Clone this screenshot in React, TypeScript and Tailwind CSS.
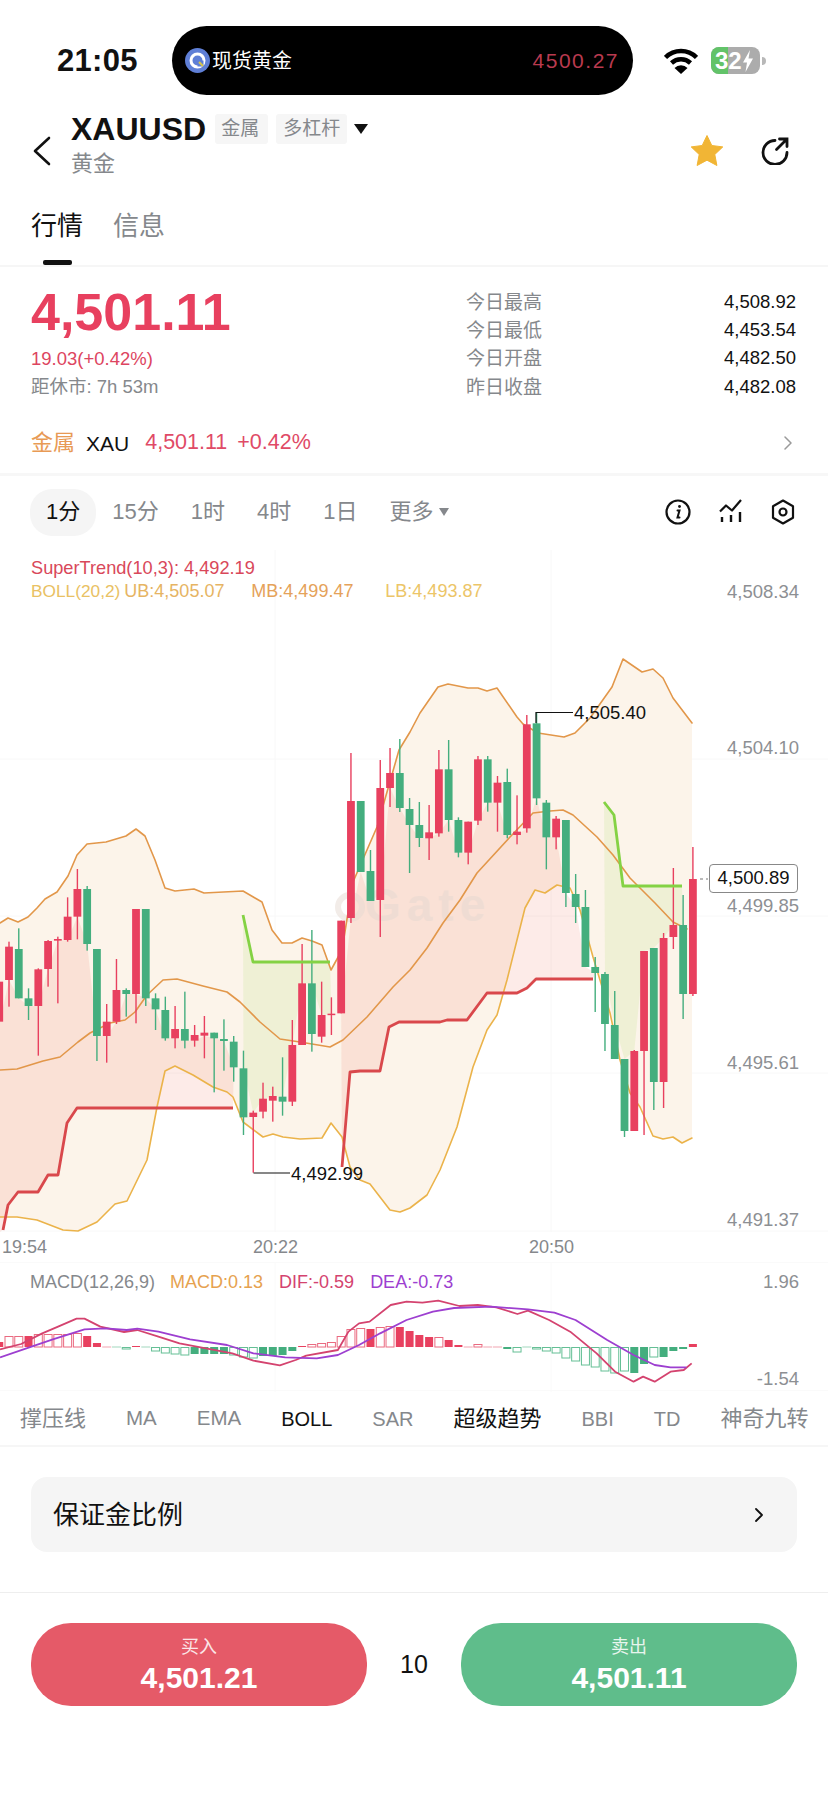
import React from "react";

type C = ["r" | "g", number, number, number, number];

const z5 = (s: string, a: number, b: number, c: number, d: number): C => [s as "r" | "g", 880 + a / 3, 880 + b / 3, 880 + c / 3, 880 + d / 3];
const z4 = (s: string, a: number, b: number, c: number, d: number): C => [s as "r" | "g", 580 + a / 3, 580 + b / 3, 580 + c / 3, 580 + d / 3];

const candles: C[] = [
  z5("r", 280, 305, 425, 430), z5("r", 185, 200, 300, 380), z5("g", 145, 207, 355, 355), z5("g", 325, 355, 378, 420),
  z5("r", 265, 268, 378, 527), z5("r", 180, 183, 267, 320), z5("r", 170, 177, 182, 370), z5("r", 52, 110, 180, 185),
  z5("r", -33, 27, 110, 178), z5("g", 18, 27, 192, 212), z5("g", 207, 207, 468, 543), z5("r", 372, 425, 468, 548),
  z5("r", 237, 330, 425, 432), z5("g", 325, 330, 342, 410), z5("r", 87, 87, 342, 430), z5("g", 87, 87, 355, 378),
  z5("g", 340, 355, 388, 450), z5("g", 350, 390, 475, 482), z5("r", 378, 447, 475, 505), z5("g", 335, 447, 482, 505),
  z5("r", 435, 465, 482, 500), z5("r", 408, 458, 467, 535), z5("g", 458, 458, 475, 637), z5("g", 418, 477, 483, 572),
  z5("g", 468, 485, 562, 605), z5("g", 512, 565, 712, 765), z5("r", 692, 698, 711, 878), z5("r", 608, 656, 695, 715),
  z5("r", 620, 648, 662, 725), z5("g", 532, 650, 665, 707), z5("r", 420, 495, 665, 678), z5("r", 192, 310, 495, 495),
  z5("g", 150, 310, 462, 515), z5("r", 305, 405, 470, 488), z5("r", 352, 401, 404, 465), z5("r", 122, 122, 400, 400),
  ["r", 753, 801, 918, 923], ["g", 801, 801, 872, 872], ["g", 850, 871, 901, 901], ["r", 760, 788, 900, 937],
  ["r", 748, 773, 788, 807], ["g", 739, 773, 808, 812], ["g", 798, 809, 825, 873], ["g", 802, 825, 838, 847],
  z4("r", 675, 757, 775, 840), z4("r", 510, 568, 760, 770), z4("g", 480, 568, 720, 755), z4("g", 712, 720, 818, 832),
  z4("r", 725, 725, 818, 853), z4("r", 528, 538, 722, 735), z4("g", 528, 538, 668, 695), z4("r", 588, 608, 668, 755),
  z4("g", 566, 606, 765, 775), z4("r", 646, 755, 765, 793), z4("r", 405, 433, 745, 758), z4("g", 398, 430, 655, 675),
  z4("g", 660, 668, 772, 868), z4("r", 708, 716, 772, 808),
  ["g", 820, 820, 893, 907], ["g", 874, 894, 907, 923], ["g", 890, 907, 967, 967], ["g", 957, 967, 973, 1012],
  ["g", 972, 974, 1024, 1051], ["g", 991, 1025, 1059, 1059], ["g", 1059, 1059, 1131, 1137], ["r", 1050, 1051, 1131, 1131],
  ["r", 951, 951, 1051, 1135], ["g", 948, 948, 1082, 1110], ["r", 933, 938, 1082, 1108], ["r", 868, 925, 937, 949],
  ["g", 895, 925, 994, 1019], ["r", 847, 879, 994, 996],
];

const cx = (i: number) => -0.77 + 9.77 * i;
const RED = "#e8405f";
const GREEN = "#44ae7e";

const upper = [[0,923],[8,918],[18,922],[28,917],[37,908],[45,899],[57,892],[68,876],[77,855],[87,844],[106,842],[126,836],[136,829],[145,836],[155,860],[165,888],[175,891],[194,889],[204,893],[243,891],[255,898],[262,902],[272,930],[282,943],[292,943],[302,938],[312,941],[322,945],[331,970],[342,950],[353,882],[377,827],[399,750],[410,732],[420,713],[438,687],[448,684],[468,688],[478,688],[487,691],[497,688],[517,717],[523,724],[538,733],[564,737],[575,733],[590,718],[612,687],[623,659],[642,672],[653,669],[663,678],[673,698],[692,723]];
const mid = [[0,1070],[17,1069],[30,1065],[43,1061],[60,1057],[78,1042],[90,1033],[110,1023],[125,1020],[135,1012],[147,995],[163,980],[177,979],[203,986],[227,992],[240,1002],[260,1022],[280,1039],[300,1042],[330,1047],[343,1040],[367,1017],[393,987],[410,970],[427,948],[443,923],[460,900],[477,873],[510,837],[533,813],[550,811],[563,810],[573,815],[597,837],[613,855],[630,878],[650,898],[655,903],[673,922],[687,929]];
const lower = [[0,1217],[17,1217],[37,1220],[63,1230],[78,1231],[97,1222],[115,1204],[127,1201],[147,1160],[157,1107],[165,1071],[175,1066],[193,1075],[213,1087],[227,1092],[233,1097],[243,1122],[263,1137],[273,1134],[283,1137],[300,1139],[322,1138],[331,1123],[342,1137],[350,1167],[360,1180],[370,1184],[390,1210],[400,1212],[410,1208],[427,1195],[440,1170],[457,1127],[473,1067],[487,1030],[497,1015],[507,980],[525,908],[535,890],[545,893],[557,885],[570,888],[580,910],[593,957],[610,1013],[620,1060],[630,1093],[640,1107],[653,1136],[663,1139],[673,1137],[682,1143],[692,1138]];
const stRed1 = [[3,1230],[8,1205],[18,1192],[38,1192],[48,1175],[58,1175],[67,1123],[77,1108],[233,1108]];
const stRed2 = [[342,1167],[350,1072],[360,1071],[380,1071],[389,1027],[399,1022],[440,1022],[447,1020],[467,1020],[487,993],[517,993],[527,988],[536,979],[593,979]];
const stGreen1 = [[243,915],[253,962],[330,962]];
const stGreen2 = [[604,802],[614,815],[623,886],[682,886]];

const pts = (a: number[][]) => a.map((p) => p.join(",")).join(" ");
const rev = (a: number[][]) => [...a].reverse();
const tops = (from: number, to: number, k: 2 | 3) => {
  const o: number[][] = [];
  for (let i = from; i <= to; i++) o.push([Math.max(cx(i), 0), candles[i][k]]);
  return o;
};

type B = [number, number, boolean];
const bars: B[] = [
  [0,5,true],[1,11,false],[2,11,false],[3,11,true],[4,13,false],[5,13,false],[6,13,false],[7,13,false],[8,14,false],[9,11,true],[10,4,true],
  [11,0.5,false],[12,-1,false],[13,-2,false],[14,1,true],[15,-1,false],[16,-4,false],[17,-6,false],[18,-7,false],[19,-8,false],[20,-7,true],
  [21,-7,true],[22,-7,true],[23,-7,true],[24,-8,false],[25,-10,false],[26,-11,false],[27,-9,true],[28,-9,true],[29,-8,true],[30,-4,true],
  [31,1,true],[32,3,false],[33,4,false],[34,5,false],[35,11,false],[36,18,false],[37,19,false],[38,18,true],[39,20,false],[40,21,false],
  [41,20,true],[42,16,true],[43,12,true],[44,10,true],[45,10,false],[46,7,true],[47,2,true],[48,1,false],[49,3,false],[50,1,false],[51,0.5,false],
  [52,-2,true],[53,-5,false],[54,-1,false],[55,-2,false],[56,-4,false],[57,-6,false],[58,-11,false],[59,-14,false],[60,-18,false],[61,-20,false],
  [62,-24,false],[63,-26,false],[64,-24,false],[65,-26,true],[66,-17,true],[67,-10,false],[68,-10,true],[69,-4,true],[70,-2,true],[71,3,true],
];

const z7 = (a: number[][]) => a.map(([x, y]) => [x / 1.894, 1240 + y / 3]);
const dif = z7([[0,328],[40,312],[80,280],[110,260],[145,236],[160,236],[190,260],[235,276],[260,270],[300,290],[340,310],[400,328],[440,340],[480,362],[530,376],[560,360],[580,347],[640,330],[660,275],[680,250],[700,245],[740,195],[770,185],[800,188],[830,182],[870,198],[905,195],[940,202],[980,222],[1000,212],[1040,240],[1080,275],[1130,340],[1165,395],[1200,425],[1218,410],[1240,425],[1270,395],[1295,390],[1310,370]]);
const dea = z7([[0,352],[50,325],[100,298],[160,268],[200,265],[240,270],[260,266],[300,275],[360,298],[430,315],[480,340],[540,352],[600,355],[640,345],[680,315],[720,280],[770,240],[820,215],[860,204],[930,200],[1000,208],[1050,218],[1090,240],[1150,300],[1200,345],[1240,375],[1270,382],[1300,382]]);

function MainChart() {
  return (
    <svg width="828" height="682" viewBox="0 550 828 682" className="block">
      <g stroke="#f8f8f8" strokeWidth="1">
        <line x1="0" y1="759" x2="828" y2="759" />
        <line x1="0" y1="916" x2="828" y2="916" />
        <line x1="0" y1="1073" x2="828" y2="1073" />
        <line x1="0" y1="1231" x2="828" y2="1231" />
        <line x1="275" y1="550" x2="275" y2="1232" />
        <line x1="551" y1="550" x2="551" y2="1232" />
      </g>
      <polygon points={pts([...upper, ...rev(lower)])} fill="#fcf4ea" />
      <polygon points={pts([...tops(0, 24, 3), ...rev(stRed1), [0, 1232]])} fill="#f2705c" fillOpacity="0.14" />
      <polygon points={pts([...tops(35, 61, 3), ...rev(stRed2)])} fill="#f2705c" fillOpacity="0.14" />
      <polygon points={pts([...stGreen1, ...rev(tops(25, 34, 2))])} fill="#9ad84a" fillOpacity="0.13" />
      <polygon points={pts([...stGreen2, ...rev(tops(62, 70, 2))])} fill="#9ad84a" fillOpacity="0.13" />
      <circle cx="350" cy="907" r="12" fill="none" stroke="#e5d9d2" strokeWidth="6" opacity="0.5" />
      <text x="365" y="921" fontSize="46" letterSpacing="6" fontWeight="700" fill="#e5d9d2" opacity="0.5">Gate</text>
      <g fill="none" strokeLinejoin="round" strokeLinecap="round">
        <polyline points={pts(upper)} stroke="#e2974a" strokeWidth="1.6" />
        <polyline points={pts(mid)} stroke="#e2974a" strokeWidth="1.6" />
        <polyline points={pts(lower)} stroke="#ebb34a" strokeWidth="1.6" />
      </g>
      {candles.map((c, i) => {
        const col = c[0] === "r" ? RED : GREEN;
        const x = cx(i);
        return (
          <g key={i} fill={col}>
            <rect x={x - 0.7} y={c[1]} width="1.4" height={c[4] - c[1]} />
            <rect x={x - 3.9} y={c[2]} width="7.8" height={Math.max(c[3] - c[2], 1.5)} />
          </g>
        );
      })}
      <g fill="none" strokeLinejoin="round" strokeWidth="2.8">
        <polyline points={pts(stRed1)} stroke="#d9484c" />
        <polyline points={pts(stRed2)} stroke="#d9484c" />
        <polyline points={pts(stGreen1)} stroke="#84d244" />
        <polyline points={pts(stGreen2)} stroke="#84d244" />
      </g>
      <g fill="none" stroke="#111" strokeWidth="1.2">
        <polyline points="536,723 536,712.5 573,712.5" />
        <polyline points="253.5,1173 290,1173" />
        <line x1="700" y1="879" x2="708" y2="879" strokeDasharray="3 3" stroke="#777" />
      </g>
      <text x="574" y="718.500" fontSize="18.500" fill="#111">4,505.40</text>
      <text x="291" y="1179.500" fontSize="18.500" fill="#111">4,492.99</text>
    </svg>
  );
}

function MacdChart() {
  return (
    <svg width="828" height="130" viewBox="0 1262 828 130" className="block">
      <g stroke="#fafafa" strokeWidth="1">
        <line x1="0" y1="1262.500" x2="828" y2="1262.500" />
        <line x1="0" y1="1390.500" x2="828" y2="1390.500" />
        <line x1="275" y1="1262" x2="275" y2="1392" />
        <line x1="551" y1="1262" x2="551" y2="1392" />
      </g>
      {bars.map(([i, h, solid]) => {
        const col = h > 0 ? (solid ? RED : "#ea6a80") : solid ? GREEN : "#64bf95";
        const y = h > 0 ? 1347 - h : 1347;
        const ah = Math.abs(h);
        return solid ? (
          <rect key={i} x={cx(i) - 4} y={y} width="8" height={ah} fill={col} />
        ) : ah < 1.2 ? (
          <rect key={i} x={cx(i) - 4.500} y={1346.500} width="9" height="1" fill={col} opacity="0.6" />
        ) : (
          <rect key={i} x={cx(i) - 4} y={y + 0.5} width="8" height={ah - 0.5} fill="#fff" stroke={col} strokeWidth="1" />
        );
      })}
      <polyline points={pts(dif)} fill="none" stroke="#d4436f" strokeWidth="1.8" strokeLinejoin="round" />
      <polyline points={pts(dea)} fill="none" stroke="#9d3fd0" strokeWidth="1.8" strokeLinejoin="round" />
    </svg>
  );
}

function Chevron({ className, color, w = 1.500 }: { className: string; color: string; w?: number }) {
  return (
    <svg viewBox="0 0 8 14" className={className} fill="none" stroke={color} strokeWidth={w} strokeLinecap="round" strokeLinejoin="round" preserveAspectRatio="none">
      <path d="M1 1l6 6-6 6" />
    </svg>
  );
}

const axisLabel = "absolute right-[29px] text-[18.500px] leading-[22px] text-[#8d8f93]";

export default function App() {
  return (
    <div className="w-[828px] h-[1800px] bg-white overflow-hidden text-[#111] font-['Liberation_Sans','Noto_Sans_CJK_SC',sans-serif]">
      {/* status bar */}
      <div className="h-[95px] pt-[26px] flex">
        <div className="h-[69px] flex items-center w-[172px] pl-[57px]">
          <span className="text-[31px] font-bold leading-none tracking-[0.3px]">21:05</span>
        </div>
        <div className="w-[461px] h-[69px] rounded-full bg-black flex items-center justify-between pl-[13px] pr-[14px]">
          <div className="flex items-center gap-[2px]">
            <svg width="25" height="25" viewBox="0 0 25 25">
              <circle cx="12.500" cy="12.500" r="12.500" fill="#5f7fd6" />
              <circle cx="12.500" cy="12.500" r="6.500" fill="none" stroke="#fff" strokeWidth="3" />
              <path d="M12.500 12.500h6v6h-6z" fill="#5f7fd6" />
              <path d="M14 14l4 4" stroke="#d8c64a" strokeWidth="2" />
            </svg>
            <span className="text-[20px] leading-none text-white">现货黄金</span>
          </div>
          <span className="text-[21px] leading-none text-[#b93a4f] tracking-[1.500px]">4500.27</span>
        </div>
        <div className="h-[69px] flex items-center pl-[31px]">
          <svg width="34" height="26" viewBox="0 0 34 26">
            <path d="M1.500 9.500a22 22 0 0 1 31 0" fill="none" stroke="#000" strokeWidth="4.500" />
            <path d="M7.500 15a14 14 0 0 1 19 0" fill="none" stroke="#000" strokeWidth="4.500" />
            <path d="M17 26l-6.500-6a9 9 0 0 1 13 0z" fill="#000" />
          </svg>
          <div className="ml-[13px] w-[49px] h-[27px] rounded-[8px] bg-[#acacac] overflow-hidden relative flex items-center">
            <div className="absolute left-0 top-0 bottom-0 w-[17px] bg-[#62c369]" />
            <span className="relative pl-[4px] text-[24px] font-bold text-white leading-none">32</span>
            <svg width="12" height="22" viewBox="0 0 12 22" className="relative">
              <path d="M8 0L1 12.500h4L3.500 22 11 8.500H6.500z" fill="#fff" />
            </svg>
          </div>
          <div className="ml-[2px] w-[4px] h-[8px] rounded-r-full bg-[#b8b8b8]" />
        </div>
      </div>

      {/* header */}
      <div className="h-[85px] pt-[18px] pl-[33px] pr-[39px] flex items-center">
        <svg width="18" height="30" viewBox="0 0 18 30" className="mt-[8px]" fill="none" stroke="#111" strokeWidth="2.600" strokeLinecap="round" strokeLinejoin="round">
          <path d="M16 2L2 15l14 13" />
        </svg>
        <div className="ml-[20px] mt-[-5px] flex flex-col">
          <div className="flex items-center h-[30px]">
            <span className="text-[32px] font-bold leading-none">XAUUSD</span>
            <span className="ml-[9px] h-[30px] px-[6px] w-[53px] bg-[#f6f6f6] rounded-[3px] text-[19px] leading-[30px] text-[#85888c] whitespace-nowrap">金属</span>
            <span className="ml-[8px] h-[30px] w-[71px] px-[7px] bg-[#f6f6f6] rounded-[3px] text-[19px] leading-[30px] text-[#85888c] whitespace-nowrap">多杠杆</span>
            <svg width="14" height="10" viewBox="0 0 14 10" className="ml-[7px]"><path d="M0 0h14L7 10z" fill="#111" /></svg>
          </div>
          <span className="mt-[9px] text-[22px] leading-[22px] text-[#85888c]">黄金</span>
        </div>
        <div className="ml-auto flex items-center gap-[38px] mt-[8px]">
          <svg width="32" height="31" viewBox="0 0 32 31">
            <path d="M16 0.500l4.800 10 11 1.400-8 7.600 2.100 11L16 25.200 6.100 30.500l2.100-11-8-7.600 11-1.400z" fill="#f1b535" stroke="#f1b535" strokeLinejoin="round" />
          </svg>
          <svg width="28" height="28" viewBox="0 0 28 28" fill="none" stroke="#111" strokeWidth="2.800" strokeLinecap="round">
            <path d="M14 3.500A12 12 0 1 0 26 15.500" />
            <path d="M15.500 12.500L25.500 2.500M18.500 2h7.500v7.500" />
          </svg>
        </div>
      </div>

      {/* tabs */}
      <div className="h-[87px] border-b-[2px] border-[#f6f6f6] pl-[31px] flex gap-[30px]">
        <div className="flex flex-col items-center">
          <span className="mt-[33px] text-[26px] leading-[26px]">行情</span>
          <div className="mt-[21px] w-[29px] h-[5px] rounded-[2px] bg-[#111]" />
        </div>
        <span className="mt-[33px] text-[26px] leading-[26px] text-[#85888c]">信息</span>
      </div>

      {/* price */}
      <div className="h-[150px] pl-[31px] pr-[32px] pt-[18px] flex justify-between">
        <div className="flex flex-col">
          <span className="text-[52px] font-bold leading-[60px] text-[#e8405f] mt-[-3px]">4,501.11</span>
          <span className="mt-[6px] text-[18.500px] leading-[22px] text-[#dd4560]">19.03(+0.42%)</span>
          <span className="mt-[6px] text-[18.500px] leading-[22px] text-[#85888c]">距休市: 7h 53m</span>
        </div>
        <div className="w-[330px] flex flex-col mt-[3px]">
          {[["今日最高","4,508.92"],["今日最低","4,453.54"],["今日开盘","4,482.50"],["昨日收盘","4,482.08"]].map(([a,b]) => (
            <div key={a} className="h-[28.300px] flex items-center justify-between">
              <span className="text-[19px] leading-none text-[#85888c]">{a}</span>
              <span className="text-[18.500px] leading-none text-[#111]">{b}</span>
            </div>
          ))}
        </div>
      </div>
      <div className="h-[56px] pb-[4px] pl-[31px] pr-[36px] flex items-center">
        <span className="text-[22px] leading-none text-[#e89a55]">金属</span>
        <span className="ml-[11px] text-[21px] leading-none">XAU</span>
        <span className="ml-[16px] text-[21.500px] leading-none text-[#e04a66]">4,501.11</span>
        <span className="ml-[10px] text-[21.500px] leading-none text-[#e04a66]">+0.42%</span>
        <Chevron className="ml-auto w-[8px] h-[14px]" color="#9a9a9a" />
      </div>
      <div className="h-[3px] bg-[#f7f7f7]" />

      {/* timeframes */}
      <div className="h-[74px] pl-[30px] pr-[33px] flex items-center text-[22px] leading-none text-[#85888c]">
        <span className="h-[47px] px-[16px] rounded-[22px] bg-[#f5f5f5] flex items-center text-[#111] mt-[-2px]">1分</span>
        <div className="ml-[16px] flex items-center gap-[32px] mt-[-2px]">
          <span>15分</span>
          <span>1时</span>
          <span>4时</span>
          <span>1日</span>
          <span className="flex items-center gap-[5px]">更多<svg width="10" height="8" viewBox="0 0 10 8"><path d="M0 0h10L5 8z" fill="#85888c" /></svg></span>
        </div>
        <div className="ml-auto flex items-center gap-[28px] mt-[-2px]">
          <svg width="26" height="26" viewBox="0 0 26 26" fill="none" stroke="#111" strokeWidth="2.200" strokeLinecap="round">
            <circle cx="13" cy="13" r="11.500" />
            <path d="M12.500 11.500h2l-2 7h2" strokeWidth="2" />
            <circle cx="14.500" cy="7.500" r="1.400" fill="#111" stroke="none" />
          </svg>
          <svg width="24" height="26" viewBox="0 0 24 26" fill="none" stroke="#111" strokeWidth="2.200" strokeLinejoin="round">
            <path d="M1 12.500L7 6.500l6 5L22 1" />
            <path d="M3 18v5M12 16v7M21 13v10" strokeWidth="2.400" />
          </svg>
          <svg width="24" height="26" viewBox="0 0 24 26" fill="none" stroke="#111" strokeWidth="2.200" strokeLinejoin="round">
            <path d="M12 1.500l10 5.700v11.600l-10 5.700-10-5.700V7.200z" />
            <circle cx="12" cy="13" r="3.500" />
          </svg>
        </div>
      </div>

      {/* main chart */}
      <div className="relative h-[682px]">
        <MainChart />
        <div className="absolute left-[31px] top-[7px] flex flex-col text-[18.200px] leading-[23px]">
          <span className="text-[#d9485a]">SuperTrend(10,3): 4,492.19</span>
          <div className="flex whitespace-nowrap text-[18px]">
            <span className="text-[#e9c163] text-[17.300px]">BOLL(20,2)</span>
            <span className="ml-[4px] w-[127px] text-[#e6b463]">UB:4,505.07</span>
            <span className="w-[134px] text-[#e5a25a]">MB:4,499.47</span>
            <span className="text-[#ecc568]">LB:4,493.87</span>
          </div>
        </div>
        <span className={`${axisLabel} top-[31px]`}>4,508.34</span>
        <span className={`${axisLabel} top-[187px]`}>4,504.10</span>
        <span className={`${axisLabel} top-[345px]`}>4,499.85</span>
        <span className={`${axisLabel} top-[502px]`}>4,495.61</span>
        <span className={`${axisLabel} top-[659px]`}>4,491.37</span>
        <div className="absolute left-[709px] top-[314px] w-[89px] h-[29px] bg-white border border-[#888] rounded-[4px] flex items-center justify-center text-[18.500px] leading-none text-[#111]">4,500.89</div>
      </div>

      {/* time axis */}
      <div className="h-[30px] pl-[2px] flex items-center text-[18px] leading-none text-[#85888c]">
        <span className="w-[251px]">19:54</span>
        <span className="w-[276px]">20:22</span>
        <span>20:50</span>
      </div>

      {/* MACD */}
      <div className="relative h-[130px]">
        <MacdChart />
        <div className="absolute left-[30px] top-[9px] flex text-[18px] leading-[22px] whitespace-nowrap">
          <span className="text-[#85888c]">MACD(12,26,9)</span>
          <span className="ml-[15px] text-[#e6a24f]">MACD:0.13</span>
          <span className="ml-[16px] text-[#d4436f]">DIF:-0.59</span>
          <span className="ml-[16px] text-[#9d3fd0]">DEA:-0.73</span>
        </div>
        <span className={`${axisLabel} top-[9px]`}>1.96</span>
        <span className={`${axisLabel} top-[106px]`}>-1.54</span>
      </div>

      {/* indicators */}
      <div className="h-[53px] pl-[20px] flex items-center gap-[40px] text-[22px] leading-none text-[#85888c] whitespace-nowrap">
        <span>撑压线</span>
        <span className="text-[20.500px]">MA</span>
        <span className="text-[20.500px]">EMA</span>
        <span className="text-[20px] text-[#111]">BOLL</span>
        <span className="text-[20px]">SAR</span>
        <span className="text-[#111]">超级趋势</span>
        <span className="text-[20px]">BBI</span>
        <span className="text-[20px]">TD</span>
        <span>神奇九转</span>
      </div>
      <div className="h-[2px] bg-[#f6f6f6]" />

      {/* margin */}
      <div className="px-[31px] pt-[30px] pb-[40px] border-b border-[#eeeeee]">
        <div className="h-[75px] rounded-[16px] bg-[#f5f5f5] pl-[22px] pr-[34px] flex items-center justify-between">
          <span className="text-[26px] leading-none">保证金比例</span>
          <Chevron className="w-[8px] h-[14px]" color="#111" w={1.800} />
        </div>
      </div>

      {/* buy / sell */}
      <div className="px-[31px] pt-[30px] flex items-center justify-between">
        <div className="w-[336px] h-[83px] rounded-[40px] bg-[#e55a68] flex flex-col items-center text-white">
          <span className="mt-[14px] text-[18px] leading-[20px] opacity-85">买入</span>
          <span className="mt-[5px] text-[30px] font-bold leading-[32px]">4,501.21</span>
        </div>
        <span className="text-[25px] leading-none">10</span>
        <div className="w-[336px] h-[83px] rounded-[40px] bg-[#5fbd8b] flex flex-col items-center text-white">
          <span className="mt-[14px] text-[18px] leading-[20px] opacity-85">卖出</span>
          <span className="mt-[5px] text-[30px] font-bold leading-[32px]">4,501.11</span>
        </div>
      </div>
    </div>
  );
}
